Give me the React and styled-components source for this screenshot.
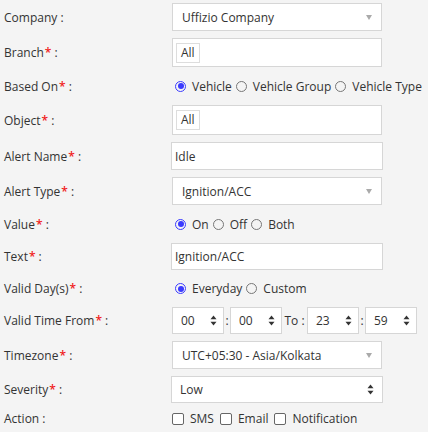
import React from "react";
import styled, { createGlobalStyle } from "styled-components";

const Global = createGlobalStyle`
  html, body { margin: 0; padding: 0; background: #f4f4f4; }
  body { font-family: "Open Sans", "Noto Sans", sans-serif; font-size: 12px; color: #333; }
`;

const Form = styled.div`
  display: flex;
  flex-direction: column;
  gap: 7px;
  padding-top: 3px;
  width: 428px;
`;

const Row = styled.div`
  display: grid;
  grid-template-columns: 171px 1fr;
  height: ${(p) => p.$h}px;
  align-items: center;
`;

const Label = styled.div`
  padding-left: 4px;
  color: #333;
  white-space: nowrap;
`;

const Req = styled.span`
  color: #f02020;
  font-weight: 600;
  margin-left: 1px;
`;

const Box = styled.div`
  box-sizing: border-box;
  width: ${(p) => p.$w || 210}px;
  margin-left: ${(p) => (p.$ml === undefined ? 1 : p.$ml)}px;
  height: 100%;
  background: #fff;
  border: 1px solid #d6d6d6;
  display: flex;
  align-items: center;
  padding-left: ${(p) => p.$pl || 9}px;
  padding-right: ${(p) => p.$pr || 8}px;
  color: #333;
  white-space: nowrap;
  flex: none;
`;

const Caret = styled.span`
  margin-left: auto;
  width: 0;
  height: 0;
  border-left: 3.5px solid transparent;
  border-right: 3.5px solid transparent;
  border-top: 5px solid #aaa;
  margin-right: 1px;
`;

const Spin = styled.svg`
  margin-left: auto;
  flex: none;
`;

const Tag = styled.span`
  border: 1px solid #ddd;
  background: #fff;
  padding: 1px 4px;
  line-height: 16px;
  margin-left: -6px;
`;

const Options = styled.div`
  display: flex;
  align-items: center;
  padding-left: ${(p) => p.$pl ?? 4}px;
  white-space: nowrap;
`;

const Opt = styled.label`
  display: flex;
  align-items: center;
  margin-right: ${(p) => p.$mr || 4}px;
`;

const Radio = styled.span`
  box-sizing: border-box;
  width: 11px;
  height: 11px;
  border-radius: 50%;
  border: 1px solid ${(p) => (p.$on ? "#3b3bff" : "#777")};
  margin-right: 6px;
  display: flex;
  align-items: center;
  justify-content: center;
  &::after {
    content: "";
    display: ${(p) => (p.$on ? "block" : "none")};
    width: 6px;
    height: 6px;
    border-radius: 50%;
    background: #3b3bff;
  }
`;

const Check = styled.span`
  box-sizing: border-box;
  width: 12px;
  height: 12px;
  border-radius: 2px;
  border: 1px solid #666;
  background: #fff;
  margin-right: 6px;
`;

const Times = styled.div`
  display: flex;
  align-items: center;
  height: 100%;
  padding-left: 1px;
`;

const Sep = styled.span`
  box-sizing: border-box;
  width: ${(p) => p.$w}px;
  text-align: center;
  flex: none;
`;

const SpinIcon = () => (
  <Spin width="7" height="11" viewBox="0 0 7 11">
    <path d="M3.5 0.5 L6.5 4.2 H0.5 Z" fill="#333" />
    <path d="M3.5 10.5 L6.5 6.8 H0.5 Z" fill="#333" />
  </Spin>
);

const TimeBox = ({ v }) => (
  <Box $w={52} $ml={0} $pl={8} $pr={6}>
    {v}
    <SpinIcon />
  </Box>
);

const L = ({ children, req }) => (
  <Label>
    {children}
    {req && <Req>*</Req>} :
  </Label>
);

const RadioGroup = ({ items, sel }) => (
  <Options>
    {items.map((t) => (
      <Opt key={t}>
        <Radio $on={t === sel} />
        {t}
      </Opt>
    ))}
  </Options>
);

export default function App() {
  return (
    <>
      <Global />
      <Form>
        <Row $h={28}>
          <L>Company</L>
          <Box>
            Uffizio Company
            <Caret />
          </Box>
        </Row>
        <Row $h={29}>
          <L req>Branch</L>
          <Box>
            <Tag>All</Tag>
          </Box>
        </Row>
        <Row $h={24}>
          <L req>Based On</L>
          <RadioGroup items={["Vehicle", "Vehicle Group", "Vehicle Type"]} sel="Vehicle" />
        </Row>
        <Row $h={30}>
          <L req>Object</L>
          <Box>
            <Tag>All</Tag>
          </Box>
        </Row>
        <Row $h={28}>
          <L req>Alert Name</L>
          <Box $w={212} $ml={0} $pl={3}>Idle</Box>
        </Row>
        <Row $h={28}>
          <L req>Alert Type</L>
          <Box>
            Ignition/ACC
            <Caret />
          </Box>
        </Row>
        <Row $h={24}>
          <L req>Value</L>
          <RadioGroup items={["On", "Off", "Both"]} sel="On" />
        </Row>
        <Row $h={27}>
          <L req>Text</L>
          <Box $w={212} $ml={0} $pl={3}>Ignition/ACC</Box>
        </Row>
        <Row $h={23}>
          <L req>Valid Day(s)</L>
          <RadioGroup items={["Everyday", "Custom"]} sel="Everyday" />
        </Row>
        <Row $h={27}>
          <L req>Valid Time From</L>
          <Times>
            <TimeBox v="00" />
            <Sep $w={6}>:</Sep>
            <TimeBox v="00" />
            <Sep $w={25}>To :</Sep>
            <TimeBox v="23" />
            <Sep $w={6}>:</Sep>
            <TimeBox v="59" />
          </Times>
        </Row>
        <Row $h={28}>
          <L req>Timezone</L>
          <Box>
            UTC+05:30 - Asia/Kolkata
            <Caret />
          </Box>
        </Row>
        <Row $h={27}>
          <L req>Severity</L>
          <Box $w={212} $ml={0} $pl={8}>
            Low
            <SpinIcon />
          </Box>
        </Row>
        <Row $h={16}>
          <L>Action</L>
          <Options $pl={1}>
            {["SMS", "Email", "Notification"].map((t) => (
              <Opt key={t} $mr={6}>
                <Check />
                {t}
              </Opt>
            ))}
          </Options>
        </Row>
      </Form>
    </>
  );
}
